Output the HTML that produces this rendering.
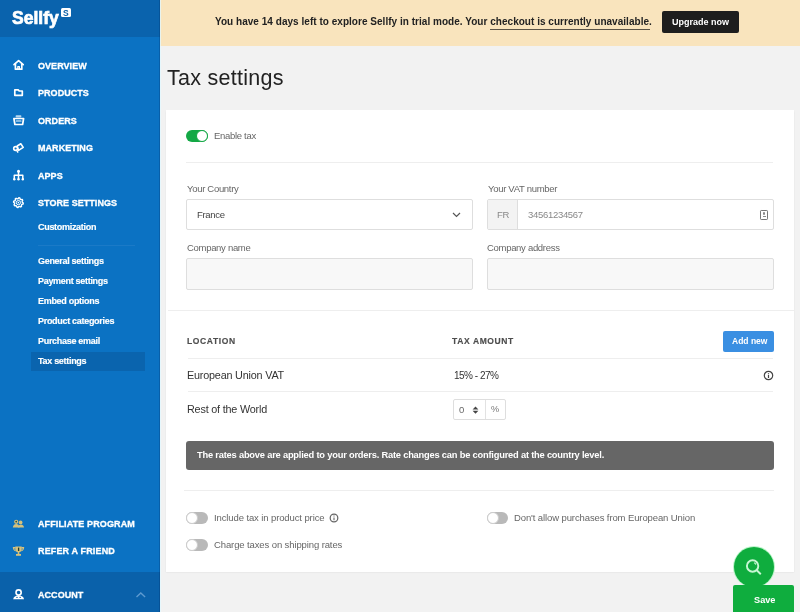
<!DOCTYPE html>
<html><head><meta charset="utf-8">
<style>
*{margin:0;padding:0;box-sizing:border-box}
html,body{width:800px;height:612px;overflow:hidden;background:#f2f2f2;font-family:"Liberation Sans",sans-serif}
.a{position:absolute}
.t{position:absolute;white-space:nowrap;line-height:1;will-change:transform}
#sb{position:absolute;left:0;top:0;width:160px;height:612px;background:#0b72c3}
#logo{position:absolute;left:0;top:0;width:160px;height:37.3px;background:#0a63ad}
#acc{position:absolute;left:0;top:572px;width:160px;height:40px;background:#0a61aa}
.nav{color:#fff;font-weight:bold;font-size:9px;letter-spacing:0.05px;left:37.5px;-webkit-text-stroke:0.3px #fff}
.sub{color:#fff;font-weight:bold;font-size:9px;letter-spacing:-0.3px;left:37.5px;-webkit-text-stroke:0.15px #fff}
#banner{position:absolute;left:160px;top:0;width:640px;height:46px;background:#f9e4bd}
#card{position:absolute;left:166px;top:110px;width:628px;height:461.5px;background:#fff;box-shadow:0 0.5px 1.5px rgba(0,0,0,0.09)}
.hr{position:absolute;height:1px;background:#eeeeee}
.lbl{color:#666;font-size:9.5px;letter-spacing:-0.3px}
.inp{position:absolute;border:1px solid #dedede;border-radius:2px;background:#fff}
.inp.e{background:#f8f8f8}
.th{color:#4d4d4d;font-weight:bold;font-size:8.5px;letter-spacing:0.62px;-webkit-text-stroke:0.15px #4d4d4d}
.row{color:#333;font-size:10.8px;letter-spacing:-0.19px}
.tg{position:absolute;width:21.5px;height:12px;border-radius:6px;background:#b9b9b9}
.tg::after{content:"";position:absolute;left:0;top:0;width:12px;height:12px;box-sizing:border-box;border-radius:50%;background:#fff;border:1px solid #cdcdcd}
.tg.on{background:#13a845}
.tg.on::after{left:9.5px;border-color:#13a845}
.opt{color:#666;font-size:9.5px;letter-spacing:-0.11px}
</style></head><body>
<div id="sb"></div>
<div id="logo"></div>
<div id="acc"></div>
<!-- logo -->
<div class="t" style="left:11.8px;top:10.4px;color:#fff;font-weight:bold;font-size:17.5px;letter-spacing:0px;-webkit-text-stroke:0.7px #fff">Sellfy</div>
<div class="a" style="left:61px;top:8px;width:10px;height:9px;background:#fff;border-radius:1.5px"></div>
<div class="t" style="left:63.3px;top:8.7px;color:#0a5fa6;font-weight:bold;font-size:8.5px">S</div>
<!-- nav -->
<div class="t nav" style="top:61.6px">OVERVIEW</div>
<div class="t nav" style="top:88.9px">PRODUCTS</div>
<div class="t nav" style="top:116.6px">ORDERS</div>
<div class="t nav" style="top:144px">MARKETING</div>
<div class="t nav" style="top:171.6px">APPS</div>
<div class="t nav" style="top:199px">STORE SETTINGS</div>
<div class="t sub" style="top:222.8px">Customization</div>
<div class="a" style="left:38px;top:245px;width:97px;height:1px;background:#1b7ac7"></div>
<div class="a" style="left:31px;top:352px;width:114px;height:19px;background:#0a64ae"></div>
<div class="t sub" style="top:257.1px">General settings</div>
<div class="t sub" style="top:277px">Payment settings</div>
<div class="t sub" style="top:297.4px">Embed options</div>
<div class="t sub" style="top:317px">Product categories</div>
<div class="t sub" style="top:337.2px">Purchase email</div>
<div class="t sub" style="top:357.2px">Tax settings</div>
<div class="t nav" style="top:519.8px;letter-spacing:0.12px">AFFILIATE PROGRAM</div>
<div class="t nav" style="top:547.2px;letter-spacing:0.15px">REFER A FRIEND</div>
<div class="t nav" style="top:590.8px;letter-spacing:0.05px">ACCOUNT</div>

<!-- nav icons -->
<svg class="a" style="left:0;top:0" width="160" height="612" viewBox="0 0 160 612">
 <g fill="none" stroke="#fff" stroke-width="1.7" stroke-linejoin="round" stroke-linecap="round">
  <path d="M14 64.6 L18.6 60.6 L23.2 64.6"/>
  <path d="M15.4 63.6 V69.2 H21.8 V63.6"/>
  <path d="M17.8 69.2 V66.6 H19.4 V69.2" stroke-width="1.2"/>
  <path d="M14.8 89.9 H18.2 L19.2 91 H22.3 V95.3 H14.8 Z"/>
  <path d="M13.9 118.5 H23.6 L22.6 124.5 H14.9 Z"/>
  <path d="M16.4 121 H21" stroke-width="1.2"/>
  <path d="M17.2 146 L20.8 143.8 L23.2 147.4 L18.6 150.4 Z" stroke-width="1.6"/><circle cx="15.6" cy="148.5" r="1.9" stroke-width="1.6"/><path d="M16.8 150.6 L17.8 152.2" stroke-width="1.4"/>
  <path d="M18.5 172 V175.3 M14.3 179 V175.3 H22.8 V179 M18.5 175.3 V179" stroke-width="1.5"/>
  <circle cx="16" cy="594" r="0" />
 </g>
 <rect x="15.6" y="115.2" width="5.8" height="2.2" rx="0.8" fill="#b8d7ef"/>
 <circle cx="18.5" cy="171.2" r="1.5" fill="#fff"/>
 <circle cx="14.3" cy="179.3" r="1.2" fill="#fff"/>
 <circle cx="18.5" cy="179.3" r="1.2" fill="#fff"/>
 <circle cx="22.8" cy="179.3" r="1.2" fill="#fff"/>
 <g transform="translate(18.4 202.6)" fill="none" stroke="#fff" stroke-width="1.4" stroke-linejoin="round">
  <path d="M4.88 0.48 L4.69 1.42 L3.44 1.84 L3.01 2.47 L3.11 3.79 L2.31 4.32 L1.13 3.73 L0.38 3.88 L-0.48 4.88 L-1.42 4.69 L-1.84 3.44 L-2.47 3.01 L-3.79 3.11 L-4.32 2.31 L-3.73 1.13 L-3.88 0.38 L-4.88 -0.48 L-4.69 -1.42 L-3.44 -1.84 L-3.01 -2.47 L-3.11 -3.79 L-2.31 -4.32 L-1.13 -3.73 L-0.38 -3.88 L0.48 -4.88 L1.42 -4.69 L1.84 -3.44 L2.47 -3.01 L3.79 -3.11 L4.32 -2.31 L3.73 -1.13 L3.88 -0.38 Z"/>
  <circle r="2.1" stroke-width="1"/>
 </g>
 <circle cx="18.4" cy="202.6" r="0.8" fill="#fff"/>
 <!-- affiliate -->
 <g fill="#d6c17c">
  <circle cx="16.2" cy="521.8" r="2.1"/>
  <circle cx="20.6" cy="522.4" r="1.9"/>
  <path d="M12.8 527.4 Q13.5 524 16.2 524 Q19 524 19.6 527.4 Z"/>
  <path d="M17.8 527.4 Q18.6 524.6 20.8 524.6 Q23.4 524.6 24 527.4 Z"/>
 </g>
 <circle cx="16.2" cy="521.6" r="0.9" fill="#2d4f3a"/>
 <!-- trophy -->
 <g fill="#d6c17c">
  <path d="M15.3 546.4 H21.7 V549.6 Q21.7 552.3 18.5 552.3 Q15.3 552.3 15.3 549.6 Z"/>
  <path d="M12.8 547 H15.6 V548.4 H14.2 Q14.4 550 15.8 550.5 L15.6 551.2 Q12.8 550.6 12.8 547 Z"/>
  <path d="M24.2 547 H21.4 V548.4 H22.8 Q22.6 550 21.2 550.5 L21.4 551.2 Q24.2 550.6 24.2 547 Z"/>
  <rect x="17.7" y="552" width="1.6" height="2"/>
  <rect x="16" y="554" width="5" height="1.8"/>
 </g>
 <path d="M18.6 547.6 V551" stroke="#233d33" stroke-width="1.3"/>
 <!-- account -->
 <circle cx="18.6" cy="592.5" r="2.6" fill="none" stroke="#fff" stroke-width="1.6"/>
 <path d="M13.2 599.2 Q13.8 595.6 18.6 595.6 Q23.4 595.6 24 599.2 Z" fill="#fff"/>
 <path d="M16.2 597.4 H17.8 M19.4 597.4 H21" stroke="#0a61aa" stroke-width="0.9"/>
 <path d="M136.5 597 L140.8 593 L145.1 597" fill="none" stroke="#5d9ad0" stroke-width="1.4"/>
</svg>
<!-- banner -->
<div id="banner"></div>
<div class="t" style="left:215px;top:17px;color:#222;font-weight:bold;font-size:10px;letter-spacing:0.03px">You have 14 days left to explore Sellfy in trial mode. Your checkout is currently unavailable.</div>
<div class="a" style="left:490px;top:28.6px;width:160px;height:1px;background:#5a5346"></div>
<div class="a" style="left:662px;top:11px;width:77px;height:22px;background:#1e1e1e;border-radius:2px"></div>
<div class="t" style="left:672.3px;top:18.2px;color:#fff;font-weight:bold;font-size:9px">Upgrade now</div>

<!-- title -->
<div class="t" style="left:167px;top:68.4px;color:#222;font-size:21.5px;letter-spacing:0.27px">Tax settings</div>

<!-- card -->
<div id="card"></div>
<div class="tg on" style="left:186px;top:130px"></div>
<div class="t lbl" style="left:213.5px;top:131.4px">Enable tax</div>
<div class="hr" style="left:186px;top:162px;width:587px"></div>

<div class="t lbl" style="left:187px;top:184px">Your Country</div>
<div class="inp" style="left:186px;top:199px;width:287px;height:31px"></div>
<div class="t lbl" style="left:196.5px;top:210px;color:#444">France</div>
<svg class="a" style="left:452px;top:212px" width="9" height="6" viewBox="0 0 9 6" fill="none" stroke="#555" stroke-width="1.2"><path d="M1 1 L4.5 4.5 L8 1"/></svg>

<div class="t lbl" style="left:487.5px;top:184px">Your VAT number</div>
<div class="inp" style="left:487px;top:199px;width:286.5px;height:31px"></div>
<div class="a" style="left:488px;top:200px;width:30px;height:29px;background:#f3f3f3;border-right:1px solid #dedede"></div>
<div class="t lbl" style="left:497px;top:210px;color:#888">FR</div>
<div class="t lbl" style="left:527.5px;top:210px;color:#888">34561234567</div>
<div class="a" style="left:760px;top:209.8px;width:8.2px;height:9.8px;border:1.5px solid #777;border-radius:1.2px"></div>
<div class="a" style="left:762.8px;top:212.4px;width:2.2px;height:2.4px;border-radius:50%;background:#888"></div>
<div class="a" style="left:762.5px;top:215.8px;width:3px;height:1.2px;background:#888"></div>

<div class="t lbl" style="left:186.5px;top:243.4px">Company name</div>
<div class="inp e" style="left:186px;top:258px;width:287px;height:31.5px"></div>
<div class="t lbl" style="left:487px;top:243.4px">Company address</div>
<div class="inp e" style="left:487px;top:258px;width:286.5px;height:31.5px"></div>

<div class="hr" style="left:168px;top:310px;width:626px"></div>

<div class="t th" style="left:186.5px;top:337.2px">LOCATION</div>
<div class="t th" style="left:452px;top:337.2px">TAX AMOUNT</div>
<div class="a" style="left:723px;top:331px;width:51px;height:21px;background:#3a8fe2;border-radius:2px"></div>
<div class="t" style="left:731.5px;top:336.8px;color:#fff;font-weight:bold;font-size:8.5px">Add new</div>

<div class="hr" style="left:188px;top:358px;width:585px"></div>
<div class="t row" style="left:186.5px;top:369.9px">European Union VAT</div>
<div class="t row" style="left:453.5px;top:370.5px;font-size:10px;letter-spacing:-0.5px">15% - 27%</div>
<svg class="a" style="left:763px;top:370px" width="11" height="11" viewBox="0 0 11 11" fill="none" stroke="#444" stroke-width="1.2"><circle cx="5.5" cy="5.5" r="4.2"/><path d="M5.5 4.8 V8 M5.5 3 V3.8"/></svg>
<div class="hr" style="left:188px;top:391px;width:585px"></div>
<div class="t row" style="left:186.5px;top:404.3px">Rest of the World</div>
<div class="inp" style="left:453.4px;top:399.2px;width:52.5px;height:21px"></div>
<div class="a" style="left:485px;top:400px;width:1px;height:19px;background:#e2e2e2"></div>
<div class="t" style="left:458.5px;top:405px;color:#666;font-size:9.5px">0</div>
<svg class="a" style="left:472px;top:404px" width="7" height="12" viewBox="0 0 7 12" fill="#444"><path d="M0.6 5.4 L3.5 2.4 L6.4 5.4 Z M0.6 6.8 L3.5 9.8 L6.4 6.8 Z"/></svg>
<div class="t" style="left:491px;top:405.2px;color:#777;font-size:9.2px">%</div>

<div class="a" style="left:186px;top:441px;width:588px;height:29px;background:#666;border-radius:3px"></div>
<div class="t" style="left:196.5px;top:450.6px;color:#fff;font-weight:bold;font-size:9.3px;letter-spacing:-0.2px">The rates above are applied to your orders. Rate changes can be configured at the country level.</div>

<div class="hr" style="left:184px;top:490px;width:590px"></div>

<div class="tg" style="left:186px;top:512px"></div>
<div class="t opt" style="left:213.5px;top:513.2px">Include tax in product price</div>
<svg class="a" style="left:328.5px;top:513.3px" width="10" height="10" viewBox="0 0 10 10" fill="none" stroke="#666" stroke-width="1.25"><circle cx="5" cy="5" r="3.8"/><path d="M5 4.5 V7.2 M5 2.6 V3.5" stroke-width="1.1"/></svg>
<div class="tg" style="left:186px;top:538.5px"></div>
<div class="t opt" style="left:213.5px;top:540px">Charge taxes on shipping rates</div>
<div class="tg" style="left:486.5px;top:512px"></div>
<div class="t opt" style="left:513.5px;top:513.2px">Don't allow purchases from European Union</div>

<!-- save & fab -->
<div class="a" style="left:733.5px;top:547px;width:40px;height:40px;border-radius:50%;background:#0fad3e;box-shadow:0 0 0 1px #b9f5c8"></div>
<svg class="a" style="left:744px;top:557px" width="20" height="20" viewBox="0 0 20 20" fill="none" stroke="#c8f7d4" stroke-width="1.9"><circle cx="8.6" cy="9" r="5.7"/><path d="M12.8 13.3 L16.8 17.2"/><path d="M10 5.8 Q11.4 6.3 11.8 7.6" stroke-width="1.1"/></svg>
<div class="a" style="left:733px;top:585px;width:61px;height:27px;background:#0fad3e;border-radius:2px 2px 0 0"></div>
<div class="t" style="left:753.5px;top:596px;color:#fff;font-weight:bold;font-size:9.2px">Save</div>
<div class="a" style="left:158.5px;top:0;width:1.5px;height:612px;background:rgba(0,40,90,0.25)"></div>
<div class="a" style="left:160px;top:0;width:1px;height:612px;background:rgba(225,248,255,0.75)"></div>
</body></html>
